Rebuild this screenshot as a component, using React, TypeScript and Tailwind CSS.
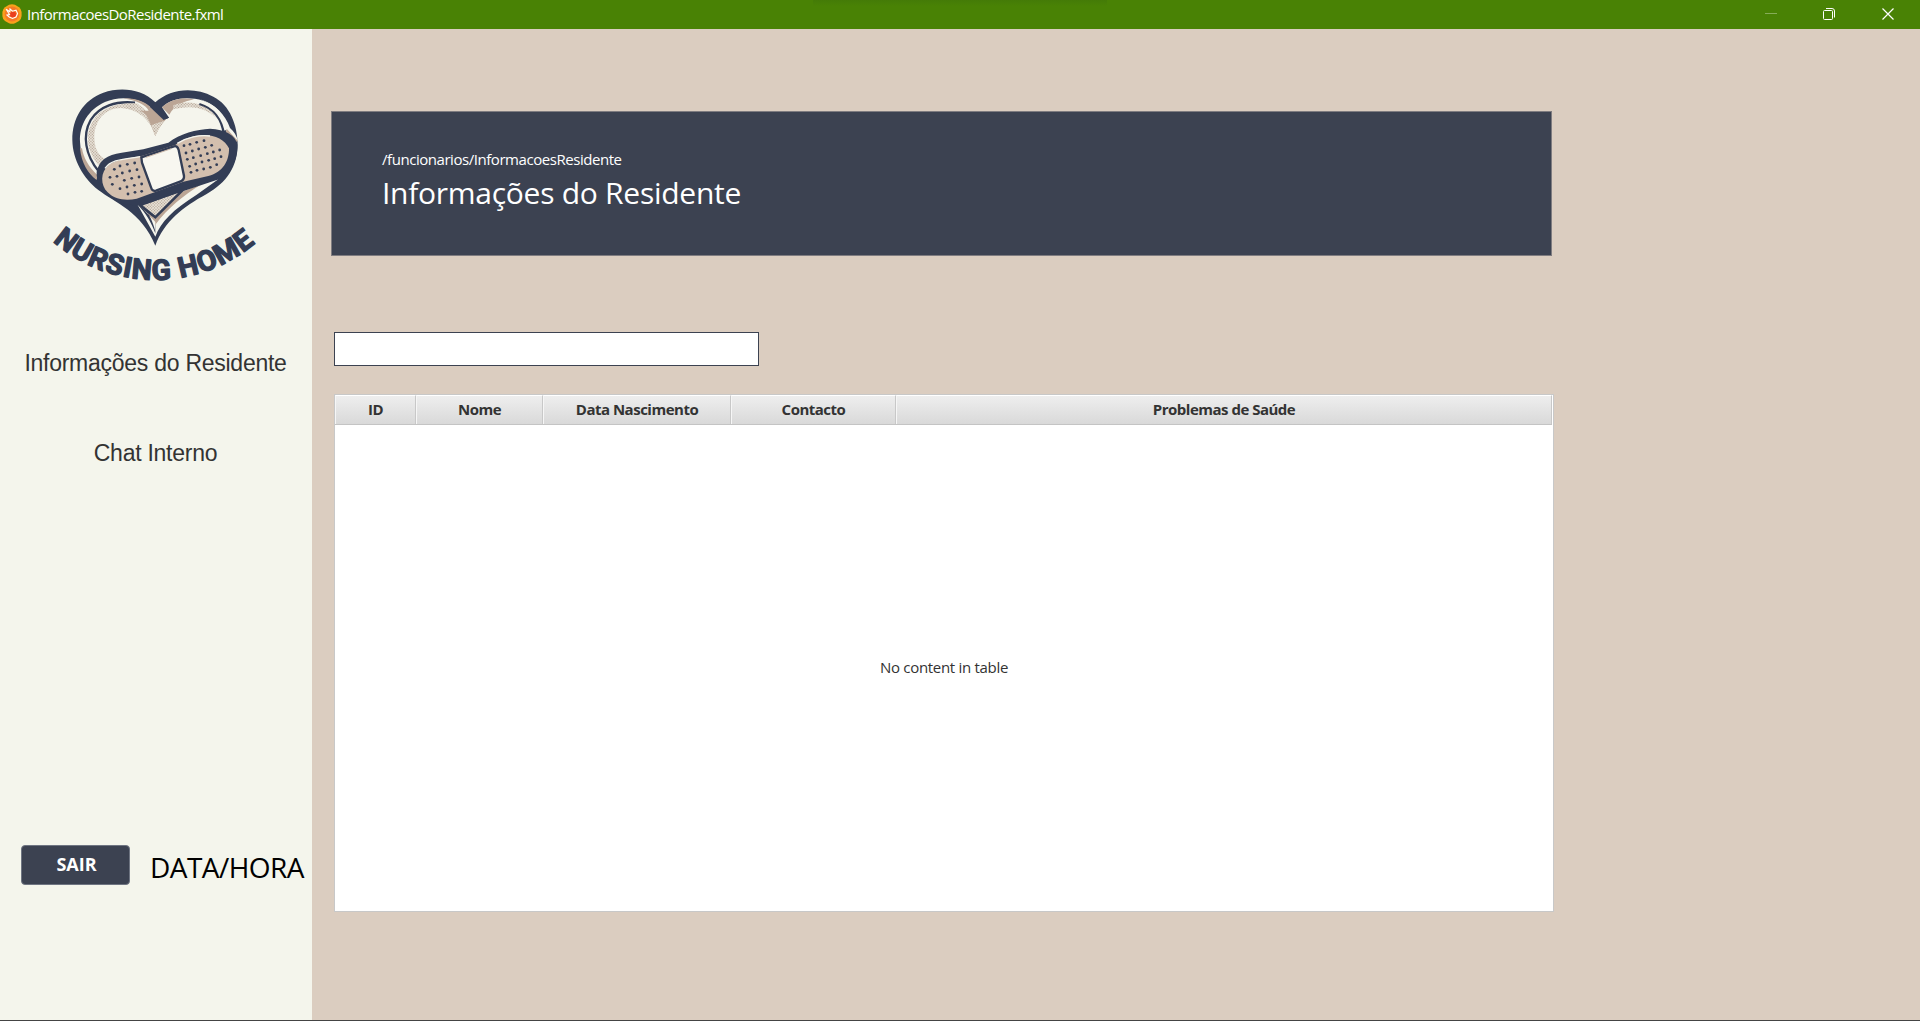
import React from "react";

const NAVY = "#333d55";

const ROW_A: [number, number][] = [
  [240, 288], [262, 283], [284, 279], [223, 298], [247, 309], [269, 303], [291, 299],
  [210, 322], [231, 319], [253, 331], [275, 325], [297, 321], [217, 343], [240, 356],
  [261, 351], [283, 346], [305, 342], [264, 372], [285, 367], [305, 364],
];
const ROW_B: [number, number][] = [
  [432, 227], [450, 223], [470, 217], [492, 212], [438, 249], [457, 243], [476, 237], [496, 232],
  [515, 226], [442, 268], [460, 263], [482, 257], [502, 251], [520, 246], [539, 240], [449, 289],
  [467, 282], [486, 276], [506, 271], [524, 266], [543, 260], [453, 307], [471, 301], [491, 297],
  [511, 292], [530, 284],
];

function Logo() {
  return (
    <svg viewBox="0 0 690 660" className="ml-10 h-[220px] w-[230px] shrink-0" role="img" aria-label="Nursing Home">
      <defs>
        <pattern id="halftone" width="6" height="6" patternUnits="userSpaceOnUse" patternTransform="rotate(45)">
          <rect width="6" height="6" fill="#f1eee4" />
          <rect width="3.8" height="3.8" fill="#b09e8f" />
        </pattern>
        <path id="arc" d="M38 514 A465 465 0 0 0 654 512" />
      </defs>
      <path
        d="M346 97 C305 55 240 50 190 68 C130 90 96 145 97 210 C98 270 130 325 175 360 C225 398 305 425 346 527 C372 455 430 410 500 372 C560 338 593 290 593 222 C592 165 570 105 520 80 C460 48 390 57 346 97 Z"
        fill={NAVY}
      />
      <path
        d="M371 150 L336 116 C300 82 240 76 195 96 C145 118 118 165 120 215 C122 265 142 305 168 328 L190 280 L400 215 L560 180 C556 140 535 108 490 92 C440 78 395 84 366 112 L387 143 Z"
        fill="#f5f5ed"
      />
      <path d="M120 235 C124 280 145 312 170 330 L172 315 C145 290 130 262 126 235 Z" fill="#bba595" />
      <path d="M176 304 C136 256 126 196 152 150 C178 108 228 92 285 98" fill="none" stroke={NAVY} strokeWidth="7" />
      <path
        d="M176 286 C140 244 134 192 160 150 C182 114 232 98 290 100 C325 120 345 160 346 195 C328 148 296 118 244 114 C192 114 162 155 163 205 C164 240 178 258 196 268 Z"
        fill="url(#halftone)"
      />
      <path d="M250 85 C292 84 320 98 336 116 L378 148 C365 162 352 180 346 198 L333 166 C322 138 318 130 300 122 L326 122 C318 104 288 92 250 85 Z" fill="#bba595" />
      <path d="M333 166 L372 152 C362 168 352 182 346 198 Z" fill="url(#halftone)" />
      <path d="M366 112 C392 88 425 82 462 88 C430 94 402 108 388 134 Z" fill="#bba595" />
      <path d="M400 106 C445 88 500 98 530 145 C490 108 450 106 400 118 Z" fill="url(#halftone)" />
      <path d="M346 97 L387 143 L371 150 L330 111 Z" fill={NAVY} />
      <path d="M478 102 C520 114 546 148 552 195" fill="none" stroke={NAVY} strokeWidth="7" />
      <path d="M480 88 C526 104 553 148 560 186 L594 214 C590 196 582 184 570 174 C556 134 525 102 480 88 Z" fill="#f5f5ed" />
      <path d="M560 176 L594 213 L588 216 L556 192 Z" fill="#bba595" />
      <path d="M292 403 L346 500 C362 455 400 418 470 374 L535 328 L470 340 Z" fill="#f5f5ed" />
      <path d="M292 403 L330 418 L346 462 L346 490 C334 458 318 430 292 403 Z" fill={NAVY} />
      <path d="M298 408 L316 418 L346 464 C384 414 430 376 486 342 L424 366 L346 446 Z" fill="#bba595" />
      <path d="M310 418 C330 432 338 456 346 484 L346 456 Z" fill="#f5f5ed" />
      <path d="M300 405 L430 358 L346 442 Z" fill="url(#halftone)" stroke={NAVY} strokeWidth="8" />
      <path
        d="M310 238 L385 218 C420 190 470 178 510 176 C555 178 588 195 592 225 C594 270 570 318 530 330 L433 362 L325 400 C290 410 250 408 215 385 C185 365 168 335 170 305 C178 270 200 255 245 248 Z"
        fill={NAVY}
      />
      <path
        d="M308 257 C270 264 232 267 207 284 C180 306 181 345 203 367 C225 390 260 393 290 386 L430 335 L505 318 C550 308 568 270 567 235 C555 208 520 192 485 195 C455 198 430 206 407 224 Z"
        fill="#d3bfae"
      />
      <path d="M195 295 C215 266 255 268 300 260" fill="none" stroke="#f5f5ed" strokeWidth="4" />
      <path d="M412 220 C440 202 480 194 510 198" fill="none" stroke="#f5f5ed" strokeWidth="4" />
      <path d="M304 262 L402 229 Q412 226 416 240 L432 318 Q433 330 422 334 L348 362 Q336 365 333 352 L306 278 Z" fill="#f8f7f0" stroke={NAVY} strokeWidth="7" />
      <path d="M318 262 L394 236" stroke="#cbb8a8" strokeWidth="3" />
      {[...ROW_A, ...ROW_B].map(([x, y]) => (
        <circle key={`${x}-${y}`} cx={x} cy={y} r="4.2" fill={NAVY} />
      ))}
      <text fill={NAVY} stroke={NAVY} strokeWidth="4" strokeLinejoin="round" fontSize="85" fontWeight="700" className="font-['Roboto']">
        <textPath href="#arc" textLength="662" lengthAdjust="spacing">NURSING HOME</textPath>
      </text>
    </svg>
  );
}

function AppIcon() {
  return (
    <svg viewBox="0 0 20 20" className="mb-px ml-0.5 h-5 w-5 shrink-0">
      <path d="M7 .8 Q10 -.5 13 .8 L17 3.2 Q19.5 5 19.6 8 V12 Q19.5 15 17 17 L13 19.2 Q10 20.4 7 19.2 L3 17 Q.5 15 .4 12 V8 Q.5 5 3 3.2 Z" fill="#f9a11b" />
      <circle cx="10" cy="10" r="7.4" fill="#f67a25" />
      <circle cx="11" cy="10.500" r="3" fill="#ea3f1f" />
      <path d="M4.200 5.200 L7.800 7.800 L8 5 L10.500 7.200 L14 6.200 L15.600 9.500 L14 13 L10.500 14.500 L7.200 13 L5 11 L7.500 10.500 Z" fill="none" stroke="#fff" strokeWidth="1.1" />
    </svg>
  );
}

function TitleBar() {
  return (
    <header className="flex h-[29px] shrink-0 items-center bg-[#498205] text-white">
      <AppIcon />
      <span className="mb-px ml-[5px] w-[196px] text-[15px] leading-[28px] tracking-[-0.55px] whitespace-nowrap">InformacoesDoResidente.fxml</span>
      <div className="mr-auto ml-[590px] h-1.5 w-[294px] self-start bg-gradient-to-b from-[#447b07] to-[#498205]" />
      <svg viewBox="0 0 135 14" className="mr-[23px] mb-px h-[14px] w-[135px] shrink-0" fill="none" stroke="#fff">
        <path d="M3 6.5 H15" stroke="#86ad58" />
        <rect x="61.500" y="3.500" width="9" height="9" rx="1" />
        <path d="M64 1.500 H70 Q72.500 1.500 72.500 4 V10.500" />
        <path d="M120.500 1.500 L131.500 12.500 M131.500 1.500 L120.500 12.500" strokeWidth="1.200" />
      </svg>
    </header>
  );
}

function Sidebar() {
  return (
    <aside className="flex w-[312px] shrink-0 flex-col bg-[#f4f5ec] pt-[41px]">
      <Logo />
      <nav className="mt-[58px] flex flex-col gap-[60px] pr-px text-center font-['Liberation_Sans'] text-[23px] tracking-[-0.26px] text-[#333]">
        <a className="leading-[30px] whitespace-nowrap">Informações do Residente</a>
        <a className="leading-[30px] whitespace-nowrap">Chat Interno</a>
      </nav>
      <div className="mt-[377px] ml-[21px] flex">
        <button className="h-[40px] w-[109px] rounded border border-[#6f7582] bg-[#3c4251] pb-px pl-0.5 text-[18px] font-bold text-white">SAIR</button>
        <span className="ml-5 text-[28px] leading-[44px] tracking-[-0.55px] whitespace-nowrap text-black">DATA/HORA</span>
      </div>
    </aside>
  );
}

const COLUMNS = [
  { label: "ID", width: "w-[81px]" },
  { label: "Nome", width: "w-[127px]" },
  { label: "Data Nascimento", width: "w-[188px]" },
  { label: "Contacto", width: "w-[165px]" },
  { label: "Problemas de Saúde", width: "w-[656px]" },
];

export default function App() {
  return (
    <div className="flex h-[1021px] w-[1920px] flex-col overflow-hidden border-b border-[#444] bg-[#dbcdc0] font-['Open_Sans',sans-serif]">
      <TitleBar />
      <div className="flex min-h-0 flex-1">
        <Sidebar />
        <main className="flex flex-col pt-[82px] pl-[19px]">
          <section className="h-[145px] w-[1221px] border border-[#7f7c80] bg-[#3c4251] pt-[35px] pl-[50px] text-white">
            <p className="text-[15px] leading-[24px] tracking-[-0.45px]">/funcionarios/InformacoesResidente</p>
            <h1 className="text-[30px] leading-[44px] tracking-[-0.27px]">Informações do Residente</h1>
          </section>
          <input className="mt-[76px] ml-[3px] h-[34px] w-[425px] border border-[#3c4251] bg-white outline-none" />
          <section className="mt-[28px] ml-[3px] flex h-[518px] w-[1220px] flex-col border border-[#c8c8c8] bg-white">
            <div className="flex h-[30px] w-[1217px] shrink-0 border-b border-[#c4c4c4] bg-gradient-to-b from-[#efefef] to-[#d9d9d9]">
              {COLUMNS.map((c) => (
                <div key={c.label} className={`${c.width} shrink-0 border-t border-r border-l border-t-white border-r-[#c8c8c8] border-l-[#f6f6f6] text-center text-[15px] leading-[27px] font-bold tracking-[-0.5px] text-[#333]`}>
                  {c.label}
                </div>
              ))}
            </div>
            <div className="flex flex-1 items-center justify-center pb-0.5 text-[15px] tracking-[-0.3px] text-[#333]">No content in table</div>
          </section>
        </main>
      </div>
    </div>
  );
}
